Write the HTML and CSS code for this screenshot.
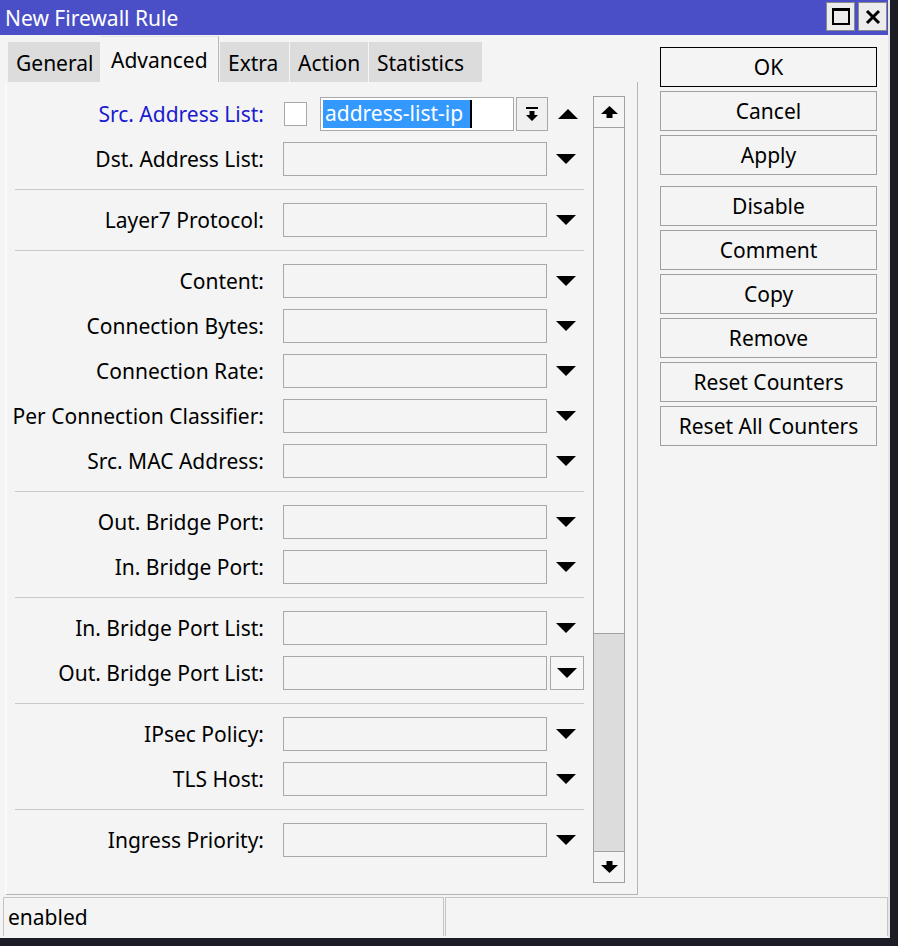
FILE: index.html
```html
<!DOCTYPE html>
<html>
<head>
<meta charset="utf-8">
<title>New Firewall Rule</title>
<link rel="stylesheet" href="styles.css">
</head>
<body>
<div class="window">
  <div class="titlebar">
    <span class="title">New Firewall Rule</span>
    <div class="winbtns">
      <div class="winbtn"><span class="maxicon"></span></div>
      <div class="winbtn">
        <svg width="16" height="16" viewBox="0 0 16 16"><path d="M2 2 L14 14 M14 2 L2 14" stroke="#000" stroke-width="3" fill="none"/></svg>
      </div>
    </div>
  </div>
  <div class="main">
    <div class="left">
      <div class="tabs">
        <div class="tab t-general">General</div>
        <div class="tab active t-advanced">Advanced</div>
        <div class="tab t-extra">Extra</div>
        <div class="tab t-action">Action</div>
        <div class="tab t-stats">Statistics</div>
      </div>
      <div class="panel">
        <div class="form">
          <div class="row">
            <div class="label blue">Src. Address List:</div>
            <div class="checkbox"></div>
            <div class="textbox"><span class="sel">address-list-ip</span><span class="caret"></span></div>
            <div class="smallbtn">
              <svg width="14" height="15" viewBox="0 0 14 15"><rect x="1" y="0" width="12" height="2" fill="#000"/><polygon points="4.5,4 9.5,4 9.5,8 13,8 7,14 1,8 4.5,8" fill="#000"/></svg>
            </div>
            <div class="arrow up-arrow"><span class="tri-up"></span></div>
          </div>
          <div class="row">
            <div class="label">Dst. Address List:</div>
            <div class="field"></div>
            <div class="arrow"><span class="tri-down"></span></div>
          </div>
          <div class="sep"></div>
          <div class="row">
            <div class="label">Layer7 Protocol:</div>
            <div class="field"></div>
            <div class="arrow"><span class="tri-down"></span></div>
          </div>
          <div class="sep"></div>
          <div class="row">
            <div class="label">Content:</div>
            <div class="field"></div>
            <div class="arrow"><span class="tri-down"></span></div>
          </div>
          <div class="row">
            <div class="label">Connection Bytes:</div>
            <div class="field"></div>
            <div class="arrow"><span class="tri-down"></span></div>
          </div>
          <div class="row">
            <div class="label">Connection Rate:</div>
            <div class="field"></div>
            <div class="arrow"><span class="tri-down"></span></div>
          </div>
          <div class="row">
            <div class="label">Per Connection Classifier:</div>
            <div class="field"></div>
            <div class="arrow"><span class="tri-down"></span></div>
          </div>
          <div class="row">
            <div class="label">Src. MAC Address:</div>
            <div class="field"></div>
            <div class="arrow"><span class="tri-down"></span></div>
          </div>
          <div class="sep"></div>
          <div class="row">
            <div class="label">Out. Bridge Port:</div>
            <div class="field"></div>
            <div class="arrow"><span class="tri-down"></span></div>
          </div>
          <div class="row">
            <div class="label">In. Bridge Port:</div>
            <div class="field"></div>
            <div class="arrow"><span class="tri-down"></span></div>
          </div>
          <div class="sep"></div>
          <div class="row">
            <div class="label">In. Bridge Port List:</div>
            <div class="field"></div>
            <div class="arrow"><span class="tri-down"></span></div>
          </div>
          <div class="row">
            <div class="label">Out. Bridge Port List:</div>
            <div class="field"></div>
            <div class="arrow hover"><span class="tri-down"></span></div>
          </div>
          <div class="sep"></div>
          <div class="row">
            <div class="label">IPsec Policy:</div>
            <div class="field"></div>
            <div class="arrow"><span class="tri-down"></span></div>
          </div>
          <div class="row">
            <div class="label">TLS Host:</div>
            <div class="field"></div>
            <div class="arrow"><span class="tri-down"></span></div>
          </div>
          <div class="sep"></div>
          <div class="row">
            <div class="label">Ingress Priority:</div>
            <div class="field"></div>
            <div class="arrow"><span class="tri-down"></span></div>
          </div>
        </div>
        <div class="scrollbar">
          <div class="sbtn">
            <svg width="17" height="12" viewBox="0 0 17 12"><polygon points="8.5,0 17,8 11.5,8 11.5,12 5.5,12 5.5,8 0,8" fill="#000"/></svg>
          </div>
          <div class="thumb"></div>
          <div class="track"></div>
          <div class="sbtn sbtn-down">
            <svg width="17" height="12" viewBox="0 0 17 12"><polygon points="5.5,0 11.5,0 11.5,4 17,4 8.5,12 0,4 5.5,4" fill="#000"/></svg>
          </div>
        </div>
      </div>
    </div>
    <div class="buttons">
      <div class="btn default">OK</div>
      <div class="btn">Cancel</div>
      <div class="btn">Apply</div>
      <div class="btn group">Disable</div>
      <div class="btn">Comment</div>
      <div class="btn">Copy</div>
      <div class="btn">Remove</div>
      <div class="btn">Reset Counters</div>
      <div class="btn">Reset All Counters</div>
    </div>
  </div>
  <div class="statusbar">
    <div class="cell cell1">enabled</div>
    <div class="cell cell2"></div>
  </div>
</div>
</body>
</html>
```
FILE: styles.css
```css
html, body {
  margin: 0;
  padding: 0;
}
body {
  background: #1c1c25;
  font-family: "Noto Sans", "Open Sans", sans-serif;
  font-size: 21px;
  color: #000;
  width: 898px;
  height: 946px;
  overflow: hidden;
}
.window {
  width: 890px;
  height: 938px;
  background: #f4f4f4;
  display: flex;
  flex-direction: column;
  border-right: 2px solid #e6e6e6;
  box-sizing: border-box;
}
.titlebar {
  height: 35px;
  flex: none;
  background: #4a4fc8;
  display: flex;
  align-items: center;
  padding-left: 5px;
  color: #fff;
}
.title {
  flex: 1;
  line-height: 35px;
  margin-top: 2px;
}
.winbtns {
  display: flex;
  gap: 3px;
  margin-right: 1px;
  margin-top: -2px;
}
.winbtn {
  width: 29px;
  height: 29px;
  box-sizing: border-box;
  background: #ececec;
  border: 1px solid #8a8a8a;
  display: flex;
  align-items: center;
  justify-content: center;
}
.maxicon {
  width: 18px;
  height: 17px;
  box-sizing: border-box;
  border: 2px solid #000;
  border-top-width: 3px;
}
.main {
  flex: 1;
  display: flex;
}
.left {
  width: 638px;
  display: flex;
  flex-direction: column;
}
.tabs {
  display: flex;
  align-items: flex-end;
  height: 47px;
  padding-left: 8px;
  gap: 1px;
}
.tab {
  height: 40px;
  line-height: 42px;
  background: #dcdcdc;
  padding-left: 8px;
  box-sizing: border-box;
  white-space: nowrap;
}
.tab.active {
  height: 46px;
  line-height: 46px;
  padding-left: 10px;
  background: #f4f4f4;
  border-right: 1px solid #b8b8b8;
  border-top: 1px solid #e4e4e4;
}
.t-general { width: 92px; }
.t-advanced { width: 118px; }
.t-extra { width: 69px; }
.t-action { width: 78px; }
.t-stats { width: 113px; }
.panel {
  margin-left: 5px;
  width: 633px;
  height: 813px;
  box-sizing: border-box;
  border-left: 2px solid #fafafa;
  border-right: 1px solid #b4b4b4;
  border-bottom: 1px solid #b4b4b4;
  display: flex;
}
.form {
  width: 586px;
  padding-top: 15px;
  display: flex;
  flex-direction: column;
  gap: 11px;
}
.row {
  display: flex;
  align-items: center;
  height: 34px;
}
.label {
  width: 257px;
  text-align: right;
  white-space: nowrap;
  flex: none;
}
.label.blue {
  color: #1a1ad0;
}
.field {
  width: 264px;
  height: 34px;
  margin-left: 19px;
  box-sizing: border-box;
  border: 1px solid #a8a8a8;
  background: #f4f4f4;
  flex: none;
}
.arrow {
  width: 37px;
  height: 34px;
  display: flex;
  align-items: center;
  justify-content: center;
  box-sizing: border-box;
  flex: none;
}
.arrow.hover {
  border: 1px solid #a8a8a8;
  background: #f6f6f6;
  margin-left: 3px;
  width: 34px;
}
.tri-down {
  width: 0;
  height: 0;
  border-left: 10px solid transparent;
  border-right: 10px solid transparent;
  border-top: 10px solid #000;
}
.tri-up {
  width: 0;
  height: 0;
  border-left: 10px solid transparent;
  border-right: 10px solid transparent;
  border-bottom: 10px solid #000;
}
.up-arrow {
  width: 40px;
}
.checkbox {
  width: 23px;
  height: 24px;
  margin-left: 20px;
  box-sizing: border-box;
  border: 1px solid #a8a8a8;
  background: #fff;
  flex: none;
}
.textbox {
  width: 194px;
  height: 34px;
  margin-left: 13px;
  box-sizing: border-box;
  border: 1px solid #a8a8a8;
  background: #fff;
  display: flex;
  align-items: center;
  padding-left: 2px;
  flex: none;
}
.sel {
  background: #3399ff;
  color: #fff;
  height: 28px;
  line-height: 27px;
  padding-left: 2px;
  padding-right: 7px;
  white-space: pre;
}
.caret {
  width: 2px;
  height: 28px;
  background: #000;
}
.smallbtn {
  width: 32px;
  height: 34px;
  margin-left: 2px;
  box-sizing: border-box;
  border: 1px solid #a8a8a8;
  background: #f0f0f0;
  display: flex;
  align-items: center;
  justify-content: center;
  flex: none;
}
.sep {
  height: 1px;
  background: #c8c8c8;
  margin: 2px 0 2px 8px;
  width: 569px;
}
.scrollbar {
  width: 32px;
  height: 787px;
  margin-top: 14px;
  box-sizing: border-box;
  border: 1px solid #a0a0a0;
  display: flex;
  flex-direction: column;
  background: #dcdcdc;
}
.sbtn {
  height: 30px;
  flex: none;
  background: #f4f4f4;
  border-bottom: 1px solid #a0a0a0;
  display: flex;
  align-items: center;
  justify-content: center;
}
.sbtn-down {
  border-bottom: none;
  border-top: 1px solid #a0a0a0;
}
.thumb {
  height: 505px;
  flex: none;
  background: #f4f4f4;
  border-bottom: 1px solid #a0a0a0;
}
.track {
  flex: 1;
}
.buttons {
  margin-left: 22px;
  margin-top: 12px;
  width: 217px;
  display: flex;
  flex-direction: column;
  gap: 4px;
}
.btn {
  height: 40px;
  box-sizing: border-box;
  border: 1px solid #a0a0a0;
  background: #f4f4f4;
  display: flex;
  align-items: center;
  justify-content: center;
  white-space: nowrap;
}
.btn.default {
  border-color: #000;
}
.btn.group {
  margin-top: 7px;
}
.statusbar {
  height: 43px;
  flex: none;
  display: flex;
  padding-top: 2px;
  box-sizing: border-box;
}
.cell {
  height: 39px;
  box-sizing: border-box;
  border: 1px solid #c4c4c4;
  border-bottom: none;
  display: flex;
  align-items: center;
}
.cell1 {
  margin-left: 3px;
  width: 441px;
  padding-left: 4px;
}
.cell2 {
  margin-left: 1px;
  width: 443px;
}
```
